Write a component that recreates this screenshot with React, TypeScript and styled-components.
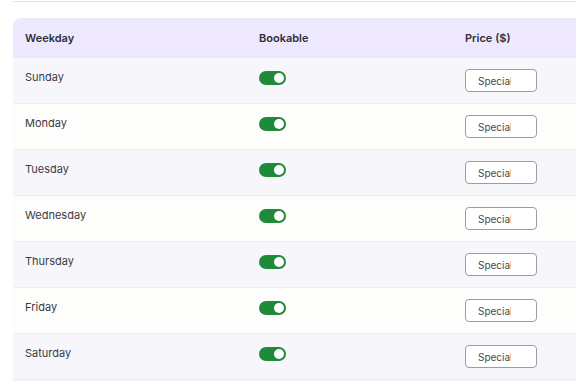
import React from "react";
import styled, { createGlobalStyle } from "styled-components";

const DAYS = ["Sunday", "Monday", "Tuesday", "Wednesday", "Thursday", "Friday", "Saturday"];

const GlobalStyle = createGlobalStyle`
  body {
    margin: 0;
    background: #ffffff;
    font-family: Inter, "Open Sans", sans-serif;
    overflow: hidden;
  }
`;

const Toggle: React.FC<{ on: boolean }> = ({ on }) => (
  <ToggleTrack $on={on}>
    <ToggleKnob $on={on} />
  </ToggleTrack>
);

export default function App() {
  return (
    <Page>
      <GlobalStyle />
      <TopRule />
      <Table>
        <HeaderRow>
          <HeadCell>Weekday</HeadCell>
          <HeadCell>Bookable</HeadCell>
          <HeadCell>Price ($)</HeadCell>
        </HeaderRow>
        {DAYS.map((day, i) => (
          <Row key={day} $alt={i % 2 === 1}>
            <DayCell>{day}</DayCell>
            <Cell>
              <Toggle on />
            </Cell>
            <Cell>
              <PriceInput type="text" placeholder="Special" />
            </Cell>
          </Row>
        ))}
      </Table>
    </Page>
  );
}

const Page = styled.div`
  width: 576px;
  height: 391px;
  overflow: hidden;
  padding-left: 13px;
  box-sizing: border-box;
`;

const TopRule = styled.div`
  margin-top: 1px;
  height: 1px;
  width: 700px;
  background: #e4e4e6;
`;

const Table = styled.div`
  margin-top: 16px;
  width: 700px;
  border-radius: 8px 8px 0 0;
  overflow: hidden;
  box-shadow: 0 1px 1px rgba(0, 0, 0, 0.04);
`;

const HeaderRow = styled.div`
  display: grid;
  grid-template-columns: 234px 206px 1fr;
  height: 40px;
  align-items: center;
  background: #ede8fd;
`;

const HeadCell = styled.div`
  padding: 0 12px;
  font-size: 11px;
  font-weight: 600;
  color: #2f2f3a;
`;

const Row = styled.div<{ $alt: boolean }>`
  display: grid;
  grid-template-columns: 234px 206px 1fr;
  height: 45px;
  align-items: start;
  background: ${(p) => (p.$alt ? "#fdfdfb" : "#f7f7fb")};
  border-bottom: 1px solid #ededef;
`;

const Cell = styled.div`
  padding: 0 12px;
`;

const DayCell = styled(Cell)`
  padding-top: 13px;
  font-size: 11px;
  line-height: 13px;
  color: #3a3a46;
`;

const ToggleTrack = styled.span<{ $on: boolean }>`
  position: relative;
  display: block;
  margin-top: 13px;
  width: 27px;
  height: 14px;
  border-radius: 7px;
  background: ${(p) => (p.$on ? "#1f8a3a" : "#c8c8cc")};
`;

const ToggleKnob = styled.span<{ $on: boolean }>`
  position: absolute;
  top: 2px;
  left: ${(p) => (p.$on ? "15px" : "2px")};
  width: 10px;
  height: 10px;
  border-radius: 50%;
  background: #ffffff;
`;

const PriceInput = styled.input`
  display: block;
  margin-top: 11px;
  width: 72px;
  height: 23px;
  box-sizing: border-box;
  padding: 0 25px 0 12px;
  border: 1px solid #9c9ca2;
  border-radius: 4px;
  background: #ffffff;
  font-family: Inter, "Open Sans", sans-serif;
  font-size: 10px;
  color: #444;
  outline: none;

  &::placeholder {
    color: #4a4a55;
  }
`;
